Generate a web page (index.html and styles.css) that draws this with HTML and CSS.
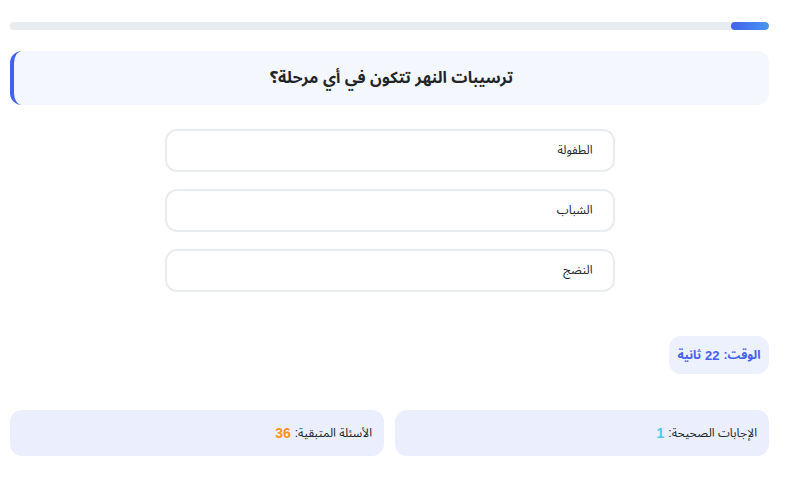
FILE: index.html
```html
<!DOCTYPE html>
<html lang="ar" dir="rtl">
<head>
<meta charset="utf-8">
<link rel="stylesheet" href="styles.css">
</head>
<body>
<div class="app">
  <div class="progress"><div class="progress-fill" style="width:5%"></div></div>
  <div class="question">ترسيبات النهر تتكون في أي مرحلة؟</div>
  <div class="options">
    <div class="option">الطفولة</div>
    <div class="option">الشباب</div>
    <div class="option">النضج</div>
  </div>
  <div class="timer-row"><div class="timer">الوقت: <span>22</span> ثانية</div></div>
  <div class="stats">
    <div class="stat">الإجابات الصحيحة: <span class="correct">1</span></div>
    <div class="stat">الأسئلة المتبقية: <span class="remaining">36</span></div>
  </div>
</div>
</body>
</html>
```
FILE: styles.css
```css
html, body { margin: 0; padding: 0; background: #fff; }
body { font-family: "Liberation Sans", "Noto Sans Arabic", sans-serif; color: #222; }
.app { padding: 22px 18px 0 10px; }
.progress { height: 8px; background: #e9ecef; border-radius: 4px; overflow: hidden; display: flex; }
.progress-fill { background: linear-gradient(to left, #4895ef, #4361ee); border-radius: 4px; }
.question {
  margin-top: 21px; height: 54px; box-sizing: border-box;
  background: #f4f7fe; border-left: 4px solid #4361ee; border-radius: 12px;
  display: flex; align-items: center; justify-content: center;
  font-size: 16px; font-weight: bold; color: #212529;
}
.options { width: 450px; margin: 24px auto 0; display: flex; flex-direction: column; gap: 17px; }
.option {
  height: 43px; box-sizing: border-box; border: 2px solid #e9ecef; border-radius: 12px;
  display: flex; align-items: center; padding: 0 20px; font-size: 12px; color: #212529; background: #fff;
}
.timer-row { display: flex; margin-top: 44px; }
.timer {
  width: 100px; height: 38px; box-sizing: border-box; background: #edf0fd; border-radius: 12px;
  display: flex; align-items: center; justify-content: center; gap: 4px;
  color: #4361ee; font-weight: bold; font-size: 12px;
}
.timer span { font-size: 13px; }
.stats { display: flex; gap: 11px; margin-top: 36px; }
.stat {
  flex: 1; height: 46px; box-sizing: border-box; background: #ebeffd; border-radius: 12px;
  display: flex; align-items: center; padding: 0 12px; font-size: 12px; color: #212529; gap: 4px;
}
.stat span { font-weight: bold; font-size: 14px; }
.correct { color: #4cc9f0; }
.remaining { color: #f7941d; }
```
